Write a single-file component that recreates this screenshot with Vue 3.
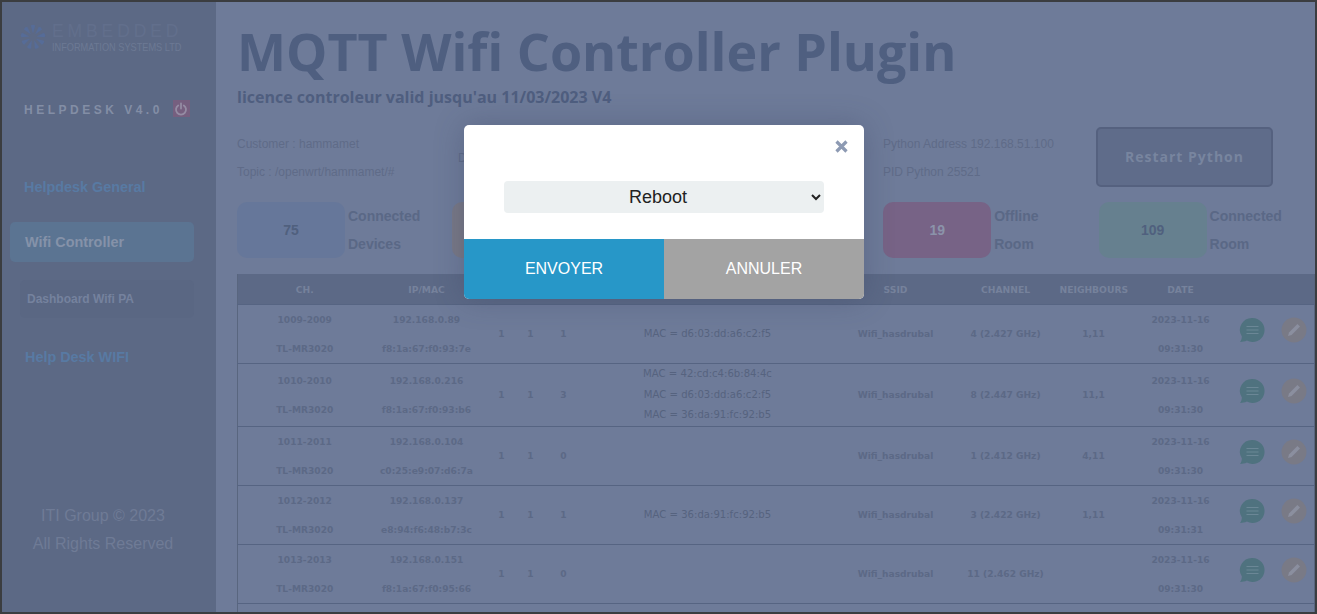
<script setup>
const rows = [
  { ch: '1009-2009', ip: '192.168.0.89', mac: 'f8:1a:67:f0:93:7e', a: 1, b: 1, c: 1, macs: ['MAC = d6:03:dd:a6:c2:f5'], channel: '4 (2.427 GHz)', nb: '1,11', time: '09:31:30' },
  { ch: '1010-2010', ip: '192.168.0.216', mac: 'f8:1a:67:f0:93:b6', a: 1, b: 1, c: 3, macs: ['MAC = 42:cd:c4:6b:84:4c', 'MAC = d6:03:dd:a6:c2:f5', 'MAC = 36:da:91:fc:92:b5'], channel: '8 (2.447 GHz)', nb: '11,1', time: '09:31:30' },
  { ch: '1011-2011', ip: '192.168.0.104', mac: 'c0:25:e9:07:d6:7a', a: 1, b: 1, c: 0, macs: [], channel: '1 (2.412 GHz)', nb: '4,11', time: '09:31:30' },
  { ch: '1012-2012', ip: '192.168.0.137', mac: 'e8:94:f6:48:b7:3c', a: 1, b: 1, c: 1, macs: ['MAC = 36:da:91:fc:92:b5'], channel: '3 (2.422 GHz)', nb: '1,11', time: '09:31:31' },
  { ch: '1013-2013', ip: '192.168.0.151', mac: 'f8:1a:67:f0:95:66', a: 1, b: 1, c: 0, macs: [], channel: '11 (2.462 GHz)', nb: '', time: '09:31:30' },
]
const chips = [
  { value: '75', tone: 'blue', label: ['Connected', 'Devices'] },
  { value: '', tone: 'grey', label: [] },
  { value: '', tone: 'plain', label: [] },
  { value: '19', tone: 'pink', label: ['Offline', 'Room'] },
  { value: '109', tone: 'teal', label: ['Connected', 'Room'] },
]
const petals = [0, 40, 80, 120, 160, 200, 240, 280, 320]
</script>

<template>
  <div class="frame">
    <aside class="side">
      <div class="logo">
        <svg class="flake" width="28" height="28" viewBox="0 0 28 28">
          <g fill="#566c98">
            <path v-for="p in petals" :key="p" d="M14 10.5 L11.8 2.5 Q14 .8 16.2 2.5 Z" :transform="`rotate(${p} 14 14)`" />
          </g>
        </svg>
        <div class="logo-text">
          <span class="logo-big">EMBEDDED</span>
          <span class="logo-small">INFORMATION SYSTEMS LTD</span>
        </div>
      </div>
      <div class="version">
        <span>HELPDESK V4.0</span>
        <span class="power">
          <svg width="14" height="14" viewBox="0 0 14 14" fill="none" stroke="#958ca4" stroke-width="1.8" stroke-linecap="round">
            <path d="M4.2 3.4a5 5 0 1 0 5.6 0" />
            <path d="M7 1.5v5" />
          </svg>
        </span>
      </div>
      <nav class="nav">
        <a class="nav-link">Helpdesk General</a>
        <a class="nav-active">Wifi Controller</a>
        <a class="nav-sub">Dashboard Wifi PA</a>
        <a class="nav-link last">Help Desk WIFI</a>
      </nav>
      <footer class="copy">
        <div>ITI Group © 2023</div>
        <div>All Rights Reserved</div>
      </footer>
    </aside>

    <main class="main">
      <h1 class="title">MQTT Wifi Controller Plugin</h1>
      <h2 class="sub">licence controleur valid jusqu'au 11/03/2023 V4</h2>

      <section class="info">
        <div class="info-col">
          <div>Customer : hammamet</div>
          <div>Topic : /openwrt/hammamet/#</div>
        </div>
        <div class="info-col mid">
          <div>&nbsp;</div>
          <div class="up">D</div>
        </div>
        <div class="info-col py">
          <div>Python Address 192.168.51.100</div>
          <div>PID Python 25521</div>
        </div>
        <button class="restart">Restart Python</button>
      </section>

      <section class="chips">
        <div v-for="(c, i) in chips" :key="i" class="chip">
          <div class="box" :class="c.tone">{{ c.value }}</div>
          <div class="chip-label">
            <div v-for="l in c.label" :key="l">{{ l }}</div>
          </div>
        </div>
      </section>

      <table class="grid">
        <colgroup>
          <col class="c-ch" /><col class="c-ip" /><col class="c-a" /><col class="c-b" /><col class="c-c" />
          <col class="c-mac" /><col class="c-ssid" /><col class="c-chan" /><col class="c-nb" /><col class="c-date" /><col />
        </colgroup>
        <thead>
          <tr>
            <th>CH.</th><th>IP/MAC</th><th></th><th></th><th></th><th></th>
            <th>SSID</th><th>CHANNEL</th><th>NEIGHBOURS</th><th>DATE</th><th></th>
          </tr>
        </thead>
        <tbody>
          <tr v-for="r in rows" :key="r.ch">
            <td class="two"><div>{{ r.ch }}</div><div>TL-MR3020</div></td>
            <td class="two"><div>{{ r.ip }}</div><div>{{ r.mac }}</div></td>
            <td>{{ r.a }}</td>
            <td>{{ r.b }}</td>
            <td>{{ r.c }}</td>
            <td class="macs"><div v-for="m in r.macs" :key="m">{{ m }}</div></td>
            <td>Wifi_hasdrubal</td>
            <td>{{ r.channel }}</td>
            <td>{{ r.nb }}</td>
            <td class="two"><div>2023-11-16</div><div>{{ r.time }}</div></td>
            <td>
              <div class="actions">
                <svg width="26" height="26" viewBox="0 0 26 26">
                  <path d="M13.5 1a12 12 0 1 1-5.6 22.6C6 24.6 3.5 25 1 25c1-1.2 1.7-2.9 1.9-5.4A12 12 0 0 1 13.5 1z" fill="#4f727f" />
                  <path d="M7.5 9.5h12M7.5 13h12M7.5 16.5h12" stroke="#6b8796" stroke-width="1.2" />
                </svg>
                <svg width="26" height="26" viewBox="0 0 26 26">
                  <circle cx="13" cy="13" r="12.5" fill="#797a86" />
                  <path d="M7 19l1-3.6 8.4-8.4 2.6 2.6-8.4 8.4z" fill="#8b8f9f" />
                </svg>
              </div>
            </td>
          </tr>
          <tr class="cut"><td colspan="11"></td></tr>
        </tbody>
      </table>
    </main>

    <div class="modal">
      <button class="close" aria-label="Fermer">
        <svg width="13" height="13" viewBox="0 0 13 13" stroke="#8d9ab3" stroke-width="3.2">
          <path d="M1.5 1.5l10 10M11.5 1.5l-10 10" />
        </svg>
      </button>
      <div class="modal-body">
        <select class="pick">
          <option>Reboot</option>
        </select>
      </div>
      <div class="modal-actions">
        <button class="send">ENVOYER</button>
        <button class="cancel">ANNULER</button>
      </div>
    </div>
  </div>
</template>

<style>
html, body { margin: 0; padding: 0; overflow: hidden; }
</style>

<style scoped>
.frame {
  position: relative;
  box-sizing: border-box;
  display: flex;
  width: 1317px;
  height: 614px;
  overflow: hidden;
  border: 2px solid #3b3d40;
  background: #6e7b99;
  font-family: "Liberation Sans", Arial, sans-serif;
}
.side {
  flex: 0 0 214px;
  display: flex;
  flex-direction: column;
  background: #5c6985;
}
.logo { display: flex; align-items: center; gap: 5px; padding: 19px 0 0 17px; height: 32px; }
.flake { flex: none; }
.logo-text { display: flex; flex-direction: column; }
.logo-big { color: #626f8c; font: 400 17.5px/20px "Liberation Sans", sans-serif; letter-spacing: 3.9px; white-space: nowrap; }
.logo-small { color: #6c7994; font: 400 10.5px/12px "Liberation Sans", sans-serif; transform: scaleX(.876); transform-origin: left; white-space: nowrap; }
.version { display: flex; margin: 48px 0 0 22px; line-height: 18px; color: #838ea5; font-size: 12px; font-weight: 700; letter-spacing: 3.5px; height: 18px; white-space: nowrap; }
.power { display: flex; align-items: center; justify-content: center; width: 17px; height: 17px; margin: -1px 0 0 10px; background: #765f7f; }
.nav { display: flex; flex-direction: column; margin-top: 60px; font-weight: 700; }
.nav-link { margin-left: 22px; color: #587aa3; font-size: 14.4px; line-height: 16px; }
.nav-active { margin: 27px 22px 0 8px; padding-left: 15px; height: 40px; line-height: 40px; border-radius: 5px; color: #8592a9; font-size: 14.4px; background: #5b7492; }
.nav-sub { margin: 18px 22px 0 18px; padding-left: 7px; height: 38px; line-height: 38px; border-radius: 5px; color: #75829e; font-size: 12px; background: #5a6783; }
.nav-link.last { margin-top: 31px; margin-left: 23px; }
.copy { margin-top: auto; padding-bottom: 54px; text-align: center; color: #6f7b96; font-size: 16px; line-height: 28px; width: 202px; }

.main { flex: 1; min-width: 0; padding: 16px 1px 0 21px; color: #4f5e7f; }
.title { margin: 0; font: 700 52px/66px "Open Sans", sans-serif; color: #4f5f80; white-space: nowrap; }
.sub { margin: 2px 0 0; font: 700 16px/22px "Open Sans", sans-serif; color: #4f5e7f; }
.info { display: flex; margin-top: 20px; height: 60px; align-items: flex-start; }
.info-col { font-size: 12px; line-height: 28px; color: #5f6b88; white-space: nowrap; padding-top: 2px; }
.info-col:first-child { width: 221px; }
.mid { width: 425px; }
.up { margin-top: -14px; }
.py { width: 213px; }
.restart {
  box-sizing: border-box;
  width: 177px;
  height: 60px;
  margin-top: -1px;
  padding-bottom: 2px;
  border: 2px solid #55617f;
  border-radius: 5px;
  background: #5f6c8a;
  color: #78859f;
  font: 700 14px "Open Sans", sans-serif;
  letter-spacing: 1px;
}
.chips { display: grid; grid-template-columns: repeat(5, 215.4px); margin-top: 14px; }
.chip { display: flex; gap: 3px; }
.box { width: 108px; height: 56px; line-height: 56px; border-radius: 10px; text-align: center; font-size: 14px; font-weight: 700; color: #50607e; }
.box.blue { background: #66779a; }
.box.grey { background: #787886; }
.box.plain { background: #6e7b99; }
.box.pink { background: #776386; color: #8b93aa; }
.box.teal { background: #66808f; }
.chip-label { font-size: 14px; font-weight: 700; line-height: 28px; color: #5a6886; }

.grid {
  width: 1078px;
  margin-top: 16px;
  table-layout: fixed;
  border-collapse: collapse;
  border-left: 1px solid #59667f;
  border-right: 1px solid #59667f;
  font: 700 9.1px "DejaVu Sans", sans-serif;
  color: #5c6986;
  text-align: center;
}
.c-ch { width: 134px; }
.c-ip { width: 110px; }
.c-a { width: 40px; }
.c-b { width: 18px; }
.c-c { width: 48px; }
.c-mac { width: 252px; }
.c-ssid { width: 112px; }
.c-chan { width: 108px; }
.c-nb { width: 68px; }
.c-date { width: 106px; }
.grid th { height: 30px; padding: 0; background: #5c6986; color: #76829c; font-weight: 700; font-size: 9.2px; border-bottom: 1px solid #566482; }
.grid td { padding: 0; border-bottom: 1px solid #566482; }
.grid td.two { padding-top: 1px; line-height: 28.5px; }
.grid td.macs { padding-right: 12px; line-height: 20.67px; font-size: 10.1px; font-weight: 400; color: #56637f; }
.cut td { height: 40px; }
.actions { display: flex; gap: 16px; justify-content: center; padding-right: 2px; transform: translateY(-4px); }

.modal {
  position: absolute;
  left: 462px;
  top: 123px;
  width: 400px;
  border-radius: 5px;
  overflow: hidden;
  background: #fff;
  box-shadow: 0 0 30px rgba(50, 60, 90, .3);
}
.close { position: absolute; top: 15px; right: 16px; padding: 0; width: 13px; height: 13px; border: 0; background: none; display: flex; }
.modal-body { display: flex; justify-content: center; padding: 56px 0 26px; }
.pick {
  width: 320px;
  height: 32px;
  border: 0;
  border-radius: 4px;
  background: #ecf0f1;
  color: #222;
  font: 18px "Liberation Sans", sans-serif;
  text-align: center;
}
.modal-actions { display: flex; }
.modal-actions button { flex: 1; height: 60px; border: 0; color: #fff; font: 16px "Liberation Sans", sans-serif; padding: 0; }
.send { background: #2797c8; }
.cancel { background: #a3a3a3; }
</style>
